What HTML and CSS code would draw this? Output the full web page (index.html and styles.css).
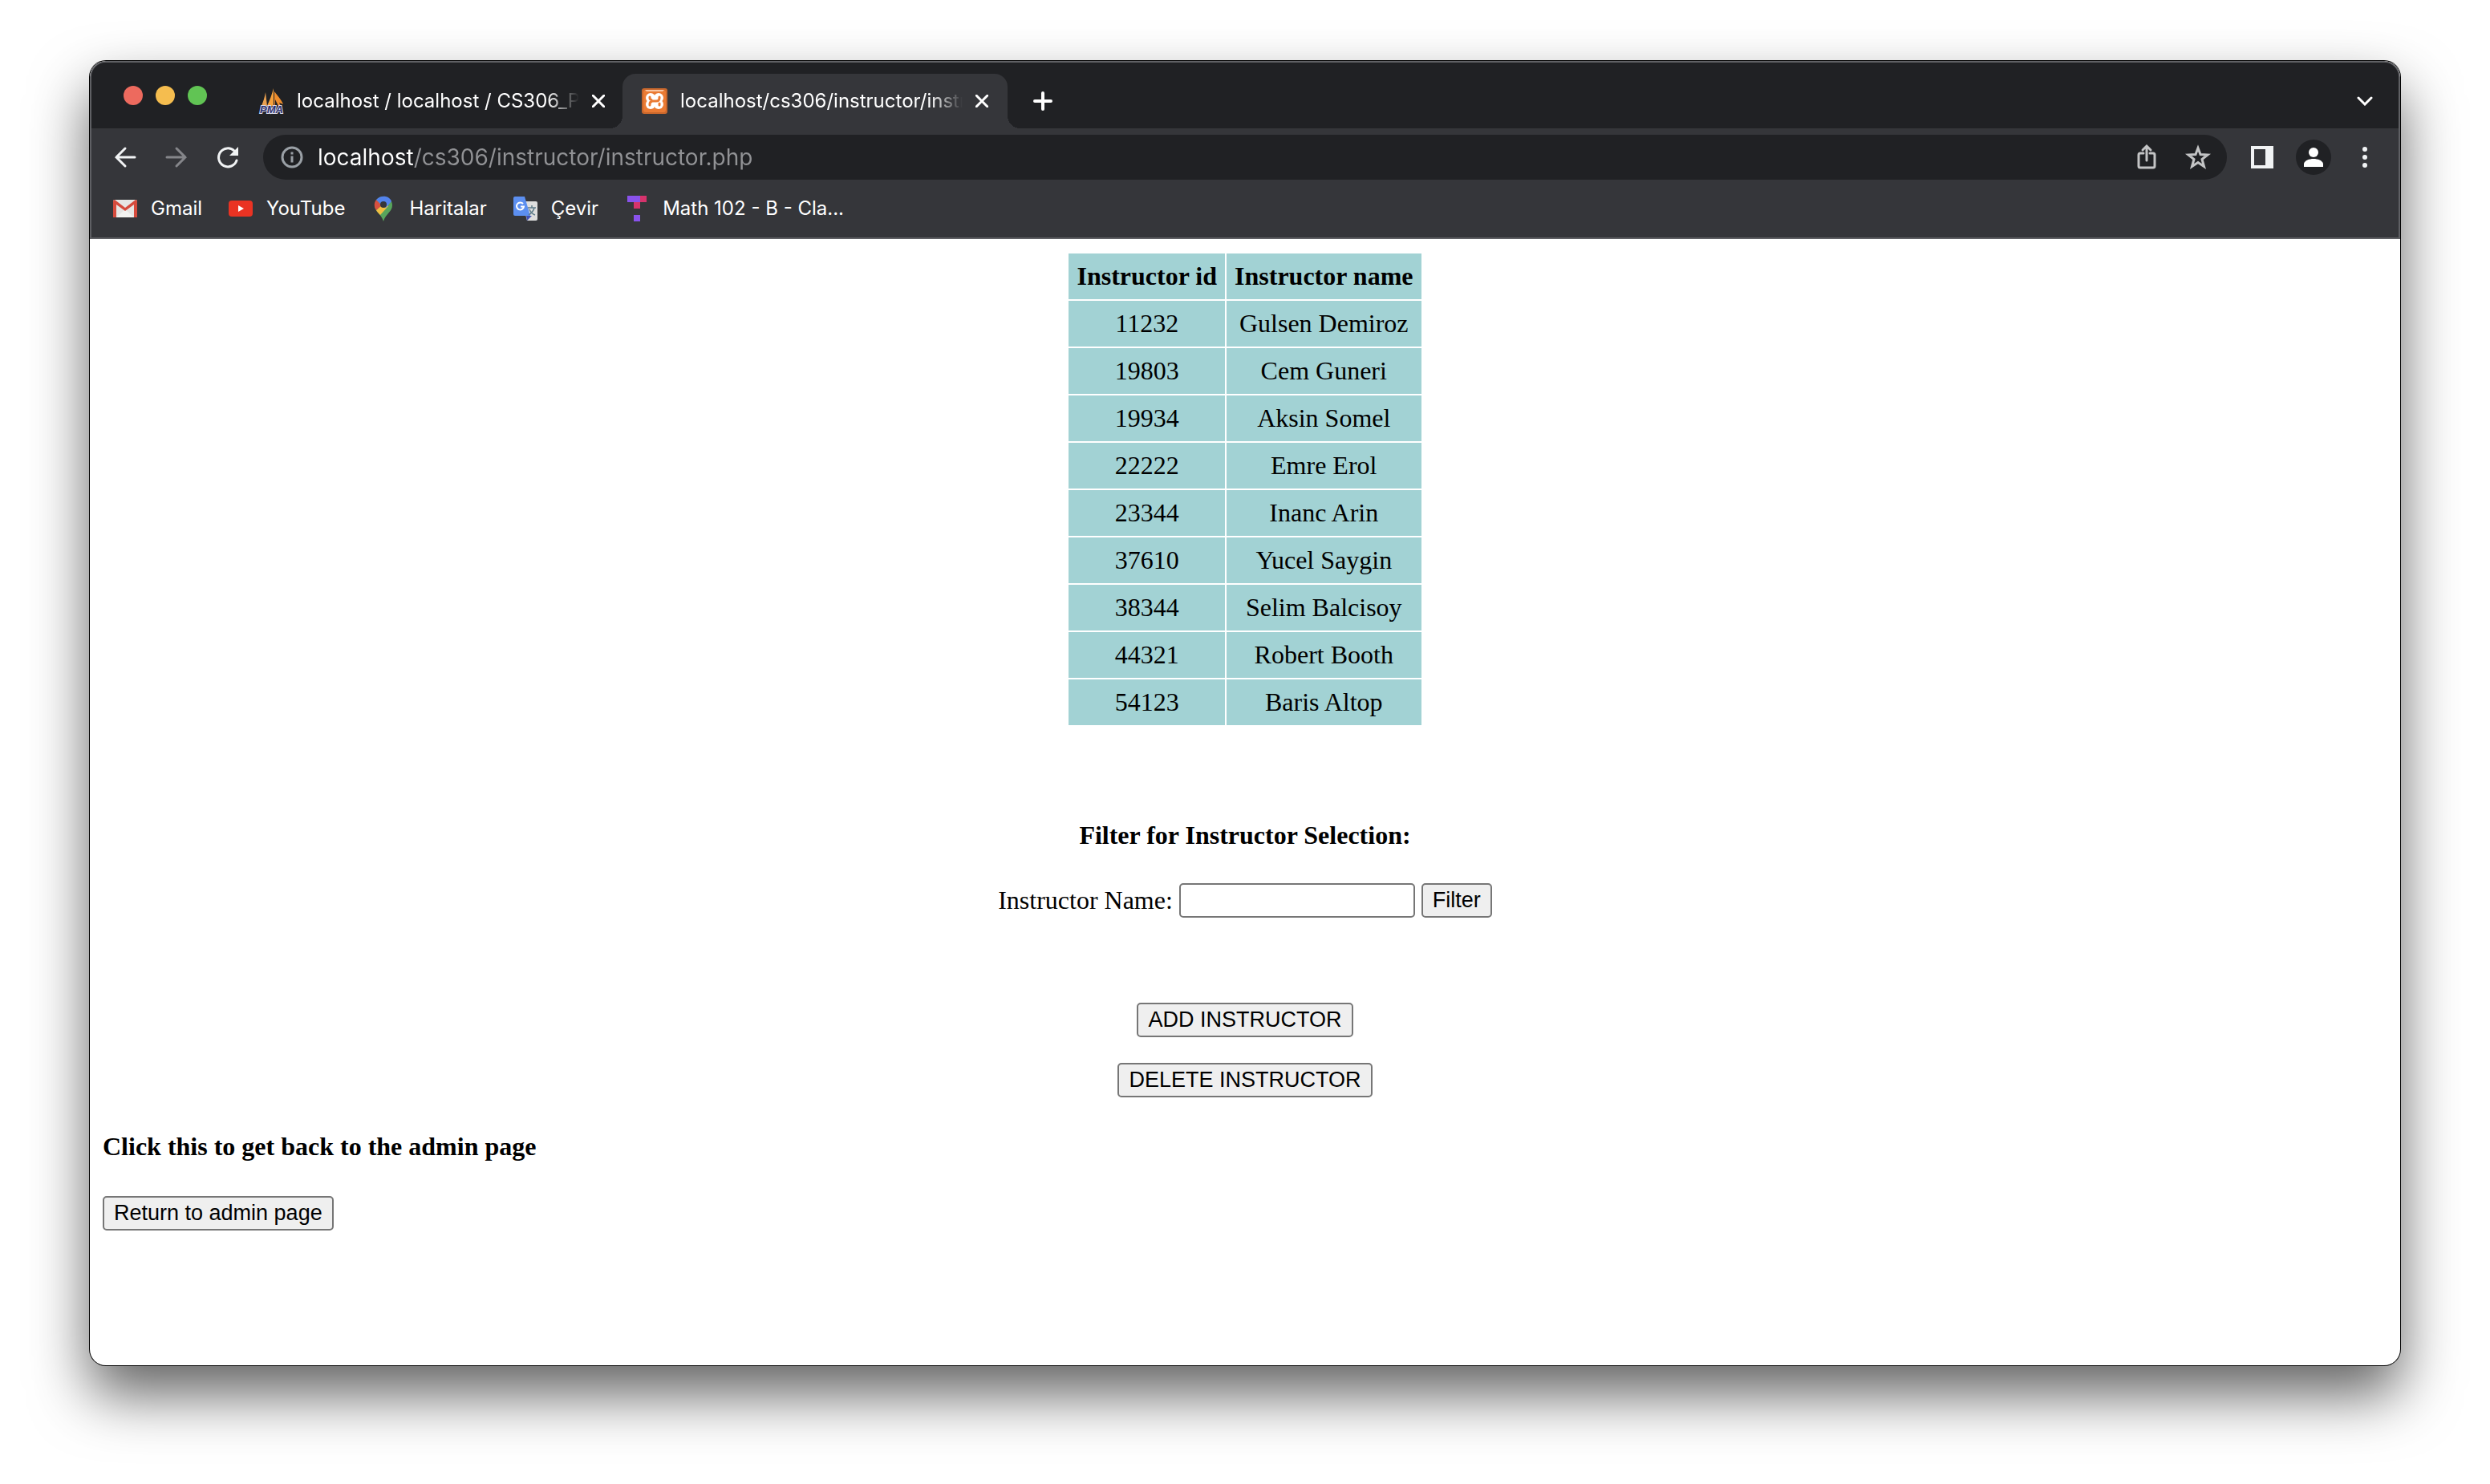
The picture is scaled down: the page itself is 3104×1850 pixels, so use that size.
FILE: index.html
```html
<!DOCTYPE html>
<html lang="en">
<head>
<meta charset="utf-8">
<title>localhost/cs306/instructor/instructor.php</title>
<link rel="stylesheet" href="styles.css">
</head>
<body>
<div class="window">
  <header class="chrome">
    <div class="tabstrip">
      <div class="lights">
        <button class="light light-close" aria-label="Close window"></button>
        <button class="light light-min" aria-label="Minimize window"></button>
        <button class="light light-max" aria-label="Zoom window"></button>
      </div>
      <div class="tab">
        <svg class="icon" viewBox="0 0 32 32" aria-hidden="true">
          <path d="M4 22C6 17 8 11 9 5L11 22Z" fill="#e9a050"/>
          <path d="M11 22C14 15 17 8 19 0L19 22Z" fill="#f5a03c"/>
          <path d="M20 4C24 9 29 15 31 20L26 18L28 22H25L21 14V22H20Z" fill="#ef8d2c"/>
          <text class="pma" x="2" y="31">PMA</text>
        </svg>
        <span class="tab-title">localhost / localhost / CS306_Project</span>
        <button class="icon-button tab-close" aria-label="Close tab"><svg class="cross" viewBox="0 0 16 16"><path d="M1 1L15 15M15 1L1 15"/></svg></button>
      </div>
      <div class="tab tab-active">
        <svg class="icon" viewBox="0 0 32 32" aria-hidden="true">
          <rect width="32" height="32" rx="3" fill="#c9672c"/>
          <rect x="2" y="2" width="28" height="28" rx="3" fill="#ea7b34"/>
          <path d="M4 2H28L26 4H6Z" fill="#f9c7a4"/>
          <g fill="#fff"><circle cx="11" cy="12" r="6"/><circle cx="11" cy="20" r="6"/><circle cx="21" cy="12" r="6"/><circle cx="21" cy="20" r="6"/></g>
          <path d="M10 11V12Q10 14 12 14.500M22 11V12Q22 16 18 16H13Q10 17 10 20V21M22 21V19" fill="none" stroke="#ea7b34" stroke-width="3" stroke-linecap="round"/>
        </svg>
        <span class="tab-title">localhost/cs306/instructor/instructor.php</span>
        <button class="icon-button tab-close" aria-label="Close tab"><svg class="cross" viewBox="0 0 16 16"><path d="M1 1L15 15M15 1L1 15"/></svg></button>
      </div>
      <button class="icon-button new-tab" aria-label="New tab"><svg class="plus" viewBox="0 0 24 24"><path d="M12 2V22M2 12H22"/></svg></button>
      <button class="icon-button tab-search" aria-label="Search tabs"><svg class="chevron" viewBox="0 0 20 12"><path d="M2 2L10 10L18 2"/></svg></button>
    </div>
    <div class="toolbar">
      <div class="nav-buttons">
        <button class="icon-button" aria-label="Back"><svg class="icon" viewBox="0 0 32 32"><path class="line" d="M28 16H5M16 5L5 16L16 27"/></svg></button>
        <button class="icon-button dim" aria-label="Forward"><svg class="icon" viewBox="0 0 32 32"><path class="line" d="M4 16H27M16 5L27 16L16 27"/></svg></button>
        <button class="icon-button" aria-label="Reload"><svg class="icon" viewBox="0 0 32 32"><path class="line" d="M27 20A11.500 11.500 0 1 1 24 8"/><path fill="currentColor" d="M29 3V14H18Z"/></svg></button>
      </div>
      <div class="omnibox">
        <svg class="icon info" viewBox="0 0 32 32" aria-hidden="true"><circle class="line" cx="16" cy="16" r="12"/><path fill="currentColor" d="M14.500 9.500H17.500V12.500H14.500ZM14.500 14.500H17.500V22.500H14.500Z"/></svg>
        <input class="url" type="text" aria-label="Address" value="localhost/cs306/instructor/instructor.php">
        <button class="icon-button soft" aria-label="Share"><svg class="icon" viewBox="0 0 32 32"><path class="line" d="M12 11H8Q6 11 6 13V27Q6 29 8 29H24Q26 29 26 27V13Q26 11 24 11H20M16 20V3M11 7L16 2L21 7"/></svg></button>
        <button class="icon-button soft" aria-label="Bookmark"><svg class="icon" viewBox="0 0 32 32"><path class="line" d="M16 4.500L19 12.500L28 13L21 18.500L23.500 27.500L16 22.500L8.500 27.500L11 18.500L4 13L13 12.500Z"/></svg></button>
      </div>
      <div class="menu-buttons">
        <button class="icon-button" aria-label="Side panel"><svg class="icon" viewBox="0 0 32 32"><path fill="currentColor" fill-rule="evenodd" d="M2 2H30V30H2ZM6 6V26H20V6Z"/></svg></button>
        <button class="icon-button avatar" aria-label="Profile"><svg class="face" viewBox="0 0 24 24"><circle cx="12" cy="6" r="6"/><path d="M0 24V20C2 12 22 12 24 20V24Z"/></svg></button>
        <button class="icon-button" aria-label="Menu"><svg class="icon" viewBox="0 0 32 32" fill="currentColor"><circle cx="16" cy="6" r="3"/><circle cx="16" cy="16" r="3"/><circle cx="16" cy="26" r="3"/></svg></button>
      </div>
    </div>
    <nav class="bookmarks" aria-label="Bookmarks">
      <a class="bookmark" href="#gmail"><svg class="icon" viewBox="0 0 32 32" aria-hidden="true"><rect x="1" y="5" width="30" height="22" rx="2" fill="#e6e6e4"/><path d="M5 27L16 17L27 27Z" fill="#f3f3f1"/><path d="M1 27V7Q1 5 3 5L16 15L29 5Q31 5 31 7V27H27V11L16 19L5 11V27Z" fill="#d54b3d"/></svg>Gmail</a>
      <a class="bookmark" href="#youtube"><svg class="icon" viewBox="0 0 32 32" aria-hidden="true"><rect x="1" y="6" width="30" height="20" rx="4" fill="#ea3323"/><path d="M13 12L20 16L13 20Z" fill="#fff"/></svg>YouTube</a>
      <a class="bookmark" href="#haritalar"><svg class="icon" viewBox="0 0 32 32" aria-hidden="true"><path d="M5 12A11 11 0 0 1 27 12C27 20 19 22 16 32C13 22 5 20 5 12Z" fill="#58a55c"/><path d="M7 18L17 9L22 13L12 24C10 22 8 20 7 18Z" fill="#f1bf42"/><path d="M7 5L14 12L7 18C4 14 4 9 7 5Z" fill="#d85040"/><path d="M7 5C12 -1 23 -1 26 7L19 15L14 12Z" fill="#5383ec"/><circle cx="16" cy="11" r="4" fill="#35363a"/></svg>Haritalar</a>
      <a class="bookmark" href="#cevir"><svg class="icon" viewBox="0 0 32 32" aria-hidden="true"><path d="M12 7H29Q31 7 31 9V29Q31 31 29 31H18Z" fill="#dedede"/><path d="M17 25H24L18 31Z" fill="#3f51b5"/><path d="M3 1H15L22 25H3Q1 25 1 23V3Q1 1 3 1Z" fill="#5c8ff0"/><path d="M13 10A4.500 4.500 0 1 0 14 13.500H10" fill="none" stroke="#fff" stroke-width="2"/><path d="M19 15H29M24 12V15M27 15Q26 20 20 24M21 17Q23 22 28 24" fill="none" stroke="#607d8b" stroke-width="1.500"/></svg>Çevir</a>
      <a class="bookmark" href="#math102"><svg class="icon" viewBox="0 0 32 32" aria-hidden="true"><path d="M4 0H20V8H4ZM12 24H20V32H12Z" fill="#8952ec"/><path d="M20 0H28V8H20ZM12 8H20V16H12Z" fill="#d6336c"/></svg>Math 102 - B - Cla...</a>
    </nav>
  </header>
  <main class="page">
    <section class="centered">
      <table class="instructors">
        <thead><tr><th>Instructor id</th><th>Instructor name</th></tr></thead>
        <tbody>
          <tr><td>11232</td><td>Gulsen Demiroz</td></tr>
          <tr><td>19803</td><td>Cem Guneri</td></tr>
          <tr><td>19934</td><td>Aksin Somel</td></tr>
          <tr><td>22222</td><td>Emre Erol</td></tr>
          <tr><td>23344</td><td>Inanc Arin</td></tr>
          <tr><td>37610</td><td>Yucel Saygin</td></tr>
          <tr><td>38344</td><td>Selim Balcisoy</td></tr>
          <tr><td>44321</td><td>Robert Booth</td></tr>
          <tr><td>54123</td><td>Baris Altop</td></tr>
        </tbody>
      </table>
      <h4 class="heading filter-heading">Filter for Instructor Selection:</h4>
      <form class="filter">
        <label for="name">Instructor Name:</label>
        <input class="field" id="name" type="text">
        <button class="button" type="button">Filter</button>
      </form>
      <div class="actions">
        <button class="button" type="button">ADD INSTRUCTOR</button>
        <button class="button" type="button">DELETE INSTRUCTOR</button>
      </div>
    </section>
    <section class="back">
      <h4 class="heading">Click this to get back to the admin page</h4>
      <button class="button" type="button">Return to admin page</button>
    </section>
  </main>
</div>
</body>
</html>
```
FILE: styles.css
```css
* { box-sizing: border-box; }

body {
  margin: 0;
  min-height: 100vh;
  padding: 76px 112px 148px;
  display: flex;
  background: #fff;
  color: #000;
  font: 32px/37px "Liberation Serif", "Times New Roman", serif;
}

button, input { margin: 0; font-family: "Liberation Sans", Arial, sans-serif; }

.window {
  flex: 1;
  min-width: 0;
  display: flex;
  flex-direction: column;
  overflow: hidden;
  border-radius: 20px;
  background: #fff;
  box-shadow: 0 0 0 1px #000, 0 36px 72px rgba(0, 0, 0, .62);
}

/* Browser frame */
.chrome {
  border: 2px solid #5f6064;
  border-radius: 20px 20px 0 0;
  background: #35363a;
  color: #fff;
  font: 24px/32px Inter, "Open Sans", sans-serif;
  overflow: hidden;
}

.tabstrip {
  display: flex;
  align-items: flex-end;
  height: 82px;
  padding: 0 26px 0 40px;
  background: #202124;
}

.lights { display: flex; gap: 16px; align-self: center; margin-right: 40px; }
.light { width: 24px; height: 24px; padding: 0; border: 0; border-radius: 50%; }
.light-close { background: #ed6a5e; }
.light-min { background: #f5bd4f; }
.light-max { background: #61c454; }

.tab {
  position: relative;
  display: flex;
  align-items: center;
  flex: 0 1 478px;
  min-width: 0;
  height: 68px;
  padding: 0 22px 0 24px;
}
.tab-active {
  flex-basis: 480px;
  padding-right: 24px;
  border-radius: 16px 16px 0 0;
  background: #35363a;
}
.tab-active::before, .tab-active::after {
  content: "";
  position: absolute;
  bottom: 0;
  width: 16px;
  height: 16px;
}
.tab-active::before { right: 100%; background: radial-gradient(circle at 0 0, #202124 16px, #35363a 16px); }
.tab-active::after { left: 100%; background: radial-gradient(circle at 100% 0, #202124 16px, #35363a 16px); }
.tab-title {
  flex: 1;
  min-width: 0;
  margin: 0 16px;
  overflow: hidden;
  white-space: nowrap;
  mask-image: linear-gradient(90deg, #000 calc(100% - 40px), transparent);
}

.icon { flex: none; display: block; width: 32px; height: 32px; overflow: visible; }
.icon-button {
  flex: none;
  display: flex;
  align-items: center;
  justify-content: center;
  width: 32px;
  height: 32px;
  padding: 0;
  border: 0;
  background: none;
  color: #f1f3f4;
}
.icon-button path, .icon-button circle { stroke-linecap: round; }
.line { fill: none; stroke: currentColor; stroke-width: 3px; }
.cross, .plus, .chevron { fill: none; stroke: #fff; stroke-width: 3px; }
.cross { width: 16px; }
.plus { width: 24px; stroke-width: 4px; }
.chevron { width: 20px; }
.tab-close { width: 16px; }
.tab-close, .new-tab, .tab-search { height: 68px; }
.new-tab { margin-left: 28px; }
.tab-search { margin-left: auto; }
.pma {
  font: italic bold 13px "Liberation Sans", Arial, sans-serif;
  fill: #2f3270;
  stroke: #d8d8e8;
  stroke-width: 2px;
  paint-order: stroke;
}

.toolbar {
  display: flex;
  align-items: center;
  gap: 28px;
  padding: 8px 26px 0;
}
.nav-buttons { display: flex; gap: 32px; }
.menu-buttons { display: flex; align-items: center; gap: 26px; }
.dim { color: #85868a; }
.soft { color: #c3c4c5; }
.omnibox {
  flex: 1;
  min-width: 0;
  display: flex;
  align-items: center;
  gap: 32px;
  height: 56px;
  padding: 0 20px;
  border-radius: 28px;
  background: #202124;
}
.info { color: #9aa0a6; }
.url {
  flex: 1;
  min-width: 0;
  margin-left: -16px;
  padding: 0;
  border: 0;
  outline: 0;
  font: 28px/40px Inter, "Open Sans", sans-serif;
  color: transparent;
  background: linear-gradient(90deg, #fff 120px, #919295 120px) text;
}
.avatar { width: 44px; height: 44px; border-radius: 50%; background: #202124; }
.face { width: 24px; fill: #fff; }

.bookmarks {
  display: flex;
  align-items: center;
  gap: 32px;
  height: 72px;
  padding: 0 26px;
}
.bookmark { display: flex; align-items: center; gap: 16px; color: #fff; text-decoration: none; white-space: nowrap; }

/* Instructor page */
.page { padding: 16px; }
.centered { display: flex; flex-direction: column; align-items: center; }

.instructors { border-collapse: separate; border-spacing: 2px; text-align: center; }
.instructors th, .instructors td { padding: 10px; background: #a2d2d4; }

.heading { margin: 0; font-size: 32px; line-height: 37px; }
.filter-heading { margin-top: 117px; }

.field, .button {
  height: 43px;
  border: 2px solid #767676;
  border-radius: 5px;
  font-size: 27px;
  line-height: 31px;
  color: #000;
}
.field { width: 294px; padding: 2px 4px; background: #fff; }
.button { padding: 0 12px; background: #efefef; }

.filter { display: flex; align-items: center; gap: 8px; margin-top: 41px; }
.actions { display: flex; flex-direction: column; align-items: center; gap: 32px; margin-top: 106px; }
.back { display: flex; flex-direction: column; align-items: flex-start; gap: 43px; margin-top: 43px; }
```
